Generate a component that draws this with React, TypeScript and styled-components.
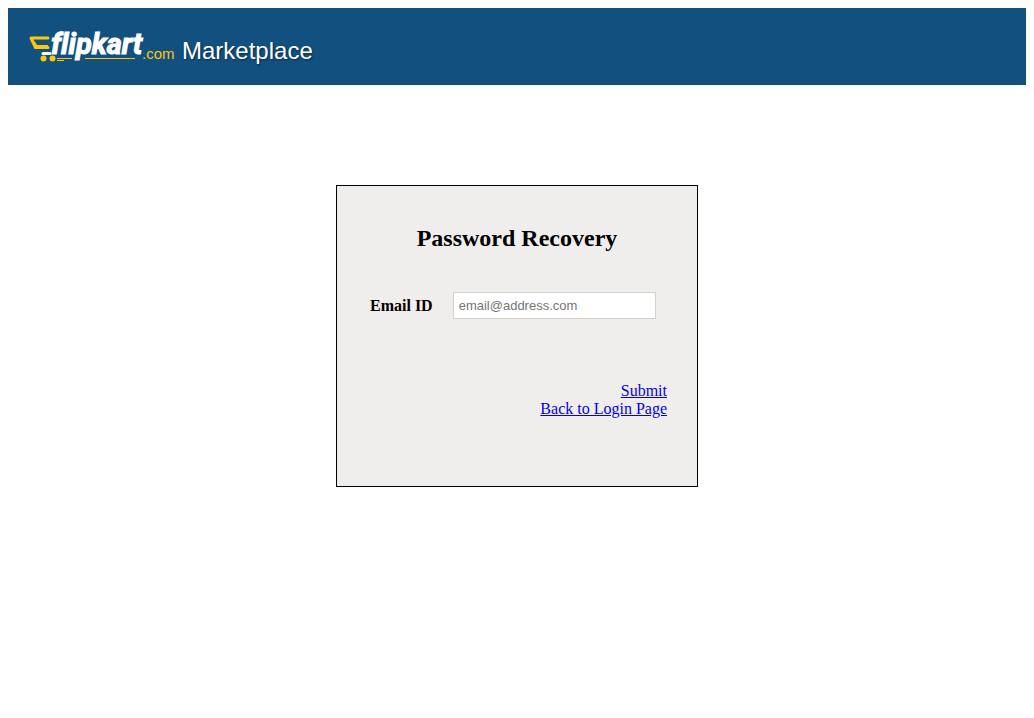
import React from 'react';
import styled, { createGlobalStyle } from 'styled-components';

const GlobalStyle = createGlobalStyle`
  body {
    margin: 8px;
    background: #fff;
    color: #000;
    font-family: 'Liberation Serif', 'Times New Roman', serif;
    font-size: 16px;
    line-height: 18px;
  }
`;

const Header = styled.header`
  display: flex;
  align-items: flex-start;
  box-sizing: border-box;
  min-height: 77px;
  padding: 16px 20px;
  gap: 4px;
  background: #12507f;
`;

const Logo = styled.svg`
  display: block;
  flex: none;
  overflow: visible;
`;

const Wordmark = styled.text`
  fill: #fff;
  stroke: #fff;
  stroke-width: 1px;
  font-family: Roboto, sans-serif;
  font-size: 29px;
  font-weight: 700;
  font-style: italic;
  font-variant-ligatures: none;
`;

const DomainSuffix = styled.text`
  fill: #fdc70c;
  font-family: 'Liberation Sans', Arial, sans-serif;
  font-size: 15px;
`;

const Product = styled.span`
  padding-top: 13px;
  color: #fff;
  font-family: 'Liberation Sans', Arial, sans-serif;
  font-size: 24px;
  line-height: 28px;
  text-shadow: 1px 1px 2px rgba(0, 0, 0, 0.5);
`;

const Card = styled.form`
  box-sizing: border-box;
  max-width: 362px;
  min-height: 302px;
  margin: 100px auto 0;
  padding: 38px 30px;
  border: 1px solid #000;
  background: #f0eeed;
`;

const Title = styled.h1`
  margin: 0 0 40px;
  font-size: 24px;
  line-height: 28px;
  font-weight: bold;
  text-align: center;
`;

const Field = styled.div`
  display: flex;
  align-items: center;
  padding: 0 3px;
  gap: 20px;
`;

const Label = styled.label`
  font-weight: bold;
`;

const EmailInput = styled.input`
  box-sizing: border-box;
  width: 203px;
  height: 27px;
  padding: 5px;
  border: 1px solid #d3d3cc;
  border-radius: 0;
  background: #fff;
  font-family: 'Liberation Sans', Arial, sans-serif;
  font-size: 13px;

  &::placeholder {
    color: #757575;
  }
`;

const Actions = styled.nav`
  display: flex;
  flex-direction: column;
  align-items: flex-end;
  margin-top: 63px;
`;

const ActionLink = styled.a`
  color: #0000ee;
  text-decoration: underline;
`;

function FlipkartLogo() {
  return (
    <Logo width="150" height="44" viewBox="0 0 150 44" role="img" aria-label="flipkart.com">
      <path
        d="M20 14H3L7.500 23.500H20"
        fill="none"
        stroke="#fdc70c"
        strokeWidth="3"
        strokeLinejoin="round"
        strokeLinecap="round"
      />
      <path d="M6 18L8.500 22H20" fill="none" stroke="#fdc70c" strokeWidth="2" />
      <path d="M15 29.500H22" stroke="#fff" strokeWidth="3" strokeLinecap="round" />
      <path d="M29 34.500H44M29 36.500H36M57 34.500H107" stroke="#fdc70c" strokeWidth="1" />
      <Wordmark x="23" y="30">flipkart</Wordmark>
      <circle cx="15.500" cy="34.500" r="3" fill="#fdc70c" />
      <circle cx="24.500" cy="34.500" r="3" fill="#fdc70c" />
      <DomainSuffix x="114" y="35">.com</DomainSuffix>
    </Logo>
  );
}

export default function App() {
  return (
    <>
      <GlobalStyle />
      <Header>
        <FlipkartLogo />
        <Product>Marketplace</Product>
      </Header>
      <main>
        <Card>
          <Title>Password Recovery</Title>
          <Field>
            <Label htmlFor="email">Email ID</Label>
            <EmailInput id="email" type="email" placeholder="email@address.com" />
          </Field>
          <Actions>
            <ActionLink href="#submit">Submit</ActionLink>
            <ActionLink href="#login">Back to Login Page</ActionLink>
          </Actions>
        </Card>
      </main>
    </>
  );
}
